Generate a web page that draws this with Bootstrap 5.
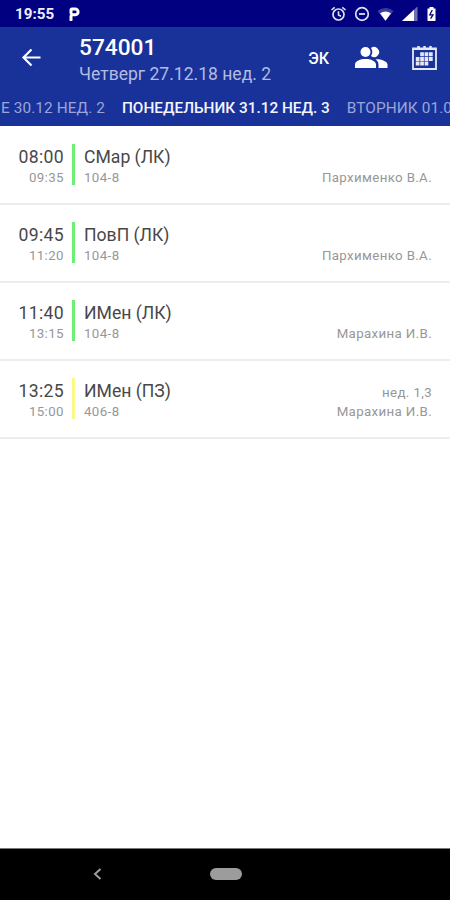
<!DOCTYPE html>
<html lang="ru">
<head>
<meta charset="utf-8">
<meta name="viewport" content="width=device-width, initial-scale=1">
<title>574001</title>
<link rel="stylesheet" href="https://cdn.jsdelivr.net/npm/bootstrap@5.3.0/dist/css/bootstrap.min.css">
<style>
body { font-family: Roboto, "Liberation Sans", sans-serif; width: 450px; height: 900px; }
svg { display: block; flex: none; }
.status-bar { height: 27px; background: #000080; padding: 1px 13px 0 15px; font-size: 15.2px; font-weight: 700; color: #eeeefa; }
.clock { padding-top: 1px; }
.phone-mark { margin-left: 15px; }
.app-header { height: 99px; background: #19329a; }
.toolbar-row { height: 62px; padding: 0 13px 0 19px; }
.titles { margin-left: 36px; padding-top: 5px; }
.group-title { font-size: 22.7px; line-height: 26px; font-weight: 500; }
.group-date { font-size: 17.55px; line-height: 26px; color: #b3bce0; }
.exam-link { font-size: 16px; font-weight: 500; margin-right: 25px; padding-top: 2px; }
.day-tabs { height: 37px; gap: 17px; padding: 2px 0 0 1px; font-size: 15.35px; font-weight: 500; color: #9aa6d6; }
.day-tabs .current { color: #f4f5fc; }
.day-tabs .prev, .day-tabs .next { font-weight: 400; letter-spacing: .1px; }
.lessons { padding-top: 1px; }
.lesson { height: 78px; padding: 17px 18px 0 0; border-bottom: 2px solid #ededed; }
.times { width: 64px; }
.times .main-line { letter-spacing: .35px; }
.bar { width: 3px; height: 41px; margin: 0 9px 0 8px; background: #6fee76; }
.bar.practice { background: #fbf98a; }
.main-line { font-size: 17.6px; line-height: 26px; color: #484848; }
.sub-line { font-size: 13.3px; line-height: 19px; color: #979797; }
.times .sub-line, .room { line-height: 15px; letter-spacing: .4px; }
.who { letter-spacing: .35px; padding-top: 5px; height: 43px; }
.nav-keys { height: 52px; background: #000; border-top: 1px solid #777; padding: 0 0 2px 93px; }
.home-pill { width: 32px; height: 12px; background: #9c9c9c; margin-left: 108px; }
</style>
<script src="https://cdn.jsdelivr.net/npm/bootstrap@5.3.0/dist/js/bootstrap.bundle.min.js"></script>
</head>
<body class="d-flex flex-column overflow-hidden bg-white text-nowrap m-0">
<div class="status-bar d-flex align-items-center">
  <span class="clock">19:55</span>
  <svg class="phone-mark" width="11" height="14" viewBox="0 0 11 14"><path d="M2 13V9M2 6V3Q2 2 3 2H6.2a2.7 2.7 0 0 1 0 5.8H2.5" fill="none" stroke="#fff" stroke-width="3" stroke-linecap="round"/></svg>
  <svg class="ms-auto" width="108" height="18" viewBox="0 0 108 18" fill="none" stroke="#dfe1f3">
    <circle cx="9.5" cy="9.5" r="5.5" stroke-width="1.7"/><path d="M2.5 5 5.7 2.3M16.500 5 13.300 2.300M9.500 6.200V10L12 11.300" stroke-width="1.6"/>
    <circle cx="33" cy="9" r="6.300" stroke-width="1.700"/><path d="M30 9H36" stroke-width="1.800"/>
    <path d="M48.500 6Q56.500-.2 64.500 6L56.500 16Z" fill="#3c3ca0" stroke="none"/><path d="M51 8.300Q56.500 4.500 62 8.300L56.500 15.700Z" fill="#fff" stroke="none"/>
    <path d="M73 16 88.500 1.500V16Z" fill="#6e6eb7" stroke="none"/><path d="M73 16 85 4.800V16Z" fill="#fff" stroke="none"/>
    <path d="M100 3.500h2V2h4v1.500h2V16h-8Z" transform="translate(-1.500 0)" fill="#fff" stroke="none"/><path d="M103.300 5 100.800 9.800h3.200L101.600 13.700" stroke="#000080" stroke-width="1.300"/>
  </svg>
</div>
<header class="app-header text-white">
  <div class="toolbar-row d-flex align-items-center">
    <svg width="24" height="24" viewBox="0 0 24 24" fill="none" stroke="#fff" stroke-width="2.200"><path d="M21.500 11.500H5M12.500 3.500 4.500 11.500 12.500 19.500"/></svg>
    <div class="titles"><div class="group-title">574001</div><div class="group-date">Четверг 27.12.18 нед. 2</div></div>
    <span class="exam-link ms-auto">ЭК</span>
    <svg width="34" height="24" viewBox="0 0 34 24" fill="#fff"><circle cx="11.500" cy="6" r="5"/><path d="M1 22V18.500C1 15 6.500 13 11.500 13S22 15 22 18.500V22ZM24.500 22V18.500C24.500 16 23.200 14.400 21.400 13.200 26.500 12.900 33.500 15 33.500 18.500V22ZM17 10A7 7 0 0 0 17 2.100 5 5 0 1 1 17 10Z"/></svg>
    <svg class="ms-4" width="25" height="26" viewBox="0 0 25 26" fill="none" stroke="#e5e8f6"><path d="M1 3.500H24V24H1Z" stroke-width="1.800"/><path d="M1 4H24" stroke-width="2"/><path d="M6.500 1V5M12.500 1V5M18.500 1V5" stroke-width="2.500"/><path d="M8.200 9.300H21M3.800 13.900H21M3.800 18.500H16.700" stroke-width="4" stroke-dasharray="3.700 .7"/></svg>
  </div>
  <nav class="day-tabs d-flex align-items-center overflow-hidden"><span class="prev">Е 30.12 НЕД. 2</span><span class="current">ПОНЕДЕЛЬНИК 31.12 НЕД. 3</span><span class="next">ВТОРНИК 01.01</span></nav>
</header>
<main class="lessons flex-grow-1">
  <div class="lesson d-flex"><div class="times text-end"><div class="main-line">08:00</div><div class="sub-line">09:35</div></div><div class="bar"></div><div><div class="main-line">СМар (ЛК)</div><div class="sub-line room">104-8</div></div><div class="who sub-line ms-auto text-end d-flex flex-column justify-content-end"><div>Пархименко В.А.</div></div></div>
  <div class="lesson d-flex"><div class="times text-end"><div class="main-line">09:45</div><div class="sub-line">11:20</div></div><div class="bar"></div><div><div class="main-line">ПовП (ЛК)</div><div class="sub-line room">104-8</div></div><div class="who sub-line ms-auto text-end d-flex flex-column justify-content-end"><div>Пархименко В.А.</div></div></div>
  <div class="lesson d-flex"><div class="times text-end"><div class="main-line">11:40</div><div class="sub-line">13:15</div></div><div class="bar"></div><div><div class="main-line">ИМен (ЛК)</div><div class="sub-line room">104-8</div></div><div class="who sub-line ms-auto text-end d-flex flex-column justify-content-end"><div>Марахина И.В.</div></div></div>
  <div class="lesson d-flex"><div class="times text-end"><div class="main-line">13:25</div><div class="sub-line">15:00</div></div><div class="bar practice"></div><div><div class="main-line">ИМен (ПЗ)</div><div class="sub-line room">406-8</div></div><div class="who sub-line ms-auto text-end d-flex flex-column justify-content-end"><div>нед. 1,3</div><div>Марахина И.В.</div></div></div>
</main>
<footer class="nav-keys d-flex align-items-center">
  <svg width="9" height="12" viewBox="0 0 9 12" fill="none" stroke="#9c9c9c" stroke-width="2"><path d="M7.500 1 2 6 7.500 11"/></svg>
  <div class="home-pill rounded-pill"></div>
</footer>
</body>
</html>
